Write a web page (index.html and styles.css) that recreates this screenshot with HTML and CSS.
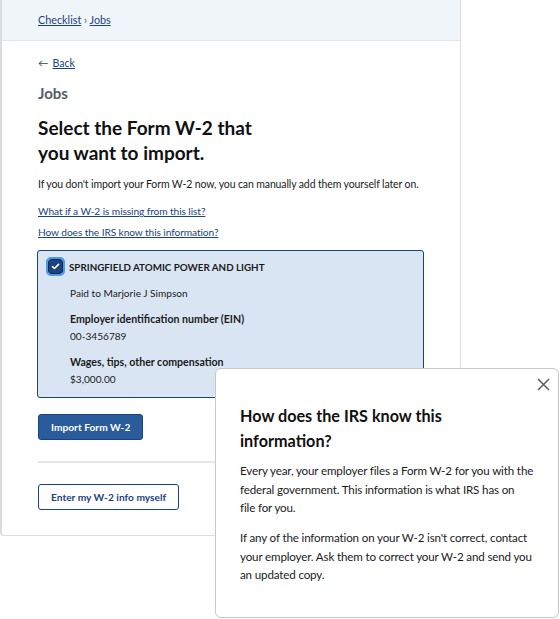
FILE: index.html
```html
<!DOCTYPE html>
<html lang="en">
<head>
    <meta charset="UTF-8">
    <meta name="viewport" content="width=device-width, initial-scale=1.0">
    <title>Jobs - Select Form W-2</title>
    <link rel="stylesheet" href="styles.css">
</head>
<body>

<div class="screen">
    <div class="page">
        <div class="crumbs">
            <a href="#">Checklist</a> <span class="sep">&rsaquo;</span> <a href="#">Jobs</a>
        </div>

        <div class="content">
            <a href="#" class="back"><span class="arrow">&larr;</span> <span class="back-text">Back</span></a>
            <div class="section">Jobs</div>
            <h1>Select the Form W-2 that<br>you want to import.</h1>
            <p class="intro">If you don't import your Form W-2 now, you can manually add them yourself later on.</p>
            <p class="help"><a href="#">What if a W-2 is missing from this list?</a></p>
            <p class="help"><a href="#">How does the IRS know this information?</a></p>

            <label class="w2">
                <div class="w2-title">
                    <span class="check">
                        <svg width="9" height="7" viewBox="0 0 10 8"><path d="M1.5 4.2 L3.8 6.3 L8.5 1.6" fill="none" stroke="#fff" stroke-width="1.8" stroke-linecap="round" stroke-linejoin="round"/></svg>
                    </span>
                    SPRINGFIELD ATOMIC POWER AND LIGHT
                </div>
                <div class="w2-body">
                    <p>Paid to Marjorie J Simpson</p>
                    <p class="field">Employer identification number (EIN)</p>
                    <p class="value">00-3456789</p>
                    <p class="field">Wages, tips, other compensation</p>
                    <p class="value">$3,000.00</p>
                </div>
            </label>

            <button class="button primary">Import Form W-2</button>
            <hr>
            <button class="button outline">Enter my W-2 info myself</button>
        </div>
    </div>

    <div class="modal">
        <button class="close" aria-label="Close">
            <svg width="13" height="13" viewBox="0 0 13 13"><path d="M1 1 L12 12 M12 1 L1 12" stroke="#5c5c5c" stroke-width="1.5" fill="none"/></svg>
        </button>
        <h2>How does the IRS know this information?</h2>
        <p>Every year, your employer files a Form W-2 for you with the federal government. This information is what IRS has on file&nbsp;for&nbsp;you.</p>
        <p>If any of the information on your W-2 isn't correct, contact your employer. Ask them to correct your W-2 and send you an updated copy.</p>
    </div>
</div>

</body>
</html>
```

FILE: styles.css
```css
body {
    margin: 0;
    font-family: Lato, "Open Sans", sans-serif;
    color: #1b1b1b;
    background: #fff;
}
a {
    color: #1a4480;
}
.screen {
    position: relative;
    width: 560px;
    height: 619px;
}
.page {
    width: 458px;
    height: 535px;
    border: 1px solid #dcdcdc;
    border-left-width: 2px;
    border-top: none;
    border-radius: 0 0 4px 4px;
}
.crumbs {
    height: 41px;
    box-sizing: border-box;
    padding: 0 0 0 36px;
    line-height: 40px;
    background: #f0f5fa;
    border-bottom: 1px solid #e1e6ec;
    font-size: 10.8px;
}
.crumbs .sep {
    color: #555;
}
.content {
    padding: 15px 36px 0;
}
.back {
    display: flex;
    width: fit-content;
    gap: 4px;
    font-size: 10.5px;
    line-height: 14px;
    text-decoration: none;
}
.back-text {
    text-decoration: underline;
}
.section {
    margin-top: 14px;
    font-size: 15px;
    line-height: 18px;
    font-weight: bold;
    color: #565c65;
}
h1 {
    margin: 13px 0 0;
    font-size: 19px;
    line-height: 25px;
    font-weight: bold;
    color: #111;
}
.intro {
    margin: 12px 0 0;
    font-size: 10.5px;
    line-height: 14px;
    letter-spacing: -0.12px;
}
.help {
    margin: 13px 0 0;
    font-size: 10.2px;
    line-height: 14px;
    letter-spacing: -0.1px;
}
.help + .help {
    margin-top: 7px;
}
.w2 {
    display: block;
    margin: 11px 0 0 -1px;
    width: 387px;
    box-sizing: border-box;
    padding: 8px 10px 11px;
    background: #d9e5f3;
    border: 1px solid #1a4480;
    border-radius: 3px;
    font-size: 10.1px;
    line-height: 14px;
}
.w2-title {
    display: flex;
    align-items: center;
    gap: 6px;
    font-weight: bold;
    font-size: 9.8px;
}
.check {
    display: flex;
    align-items: center;
    justify-content: center;
    width: 15px;
    height: 15px;
    box-sizing: border-box;
    background: #1a4480;
    border: 1px solid #102a52;
    border-radius: 3px;
    outline: 2px solid #4d97f0;
    outline-offset: 0;
}
.w2-body {
    padding-left: 22px;
}
.w2-body p {
    margin: 12px 0 0;
}
.w2-body .field {
    font-weight: bold;
    font-size: 10.6px;
}
.w2-body .value {
    margin-top: 3px;
}
.button {
    display: block;
    height: 26px;
    padding: 0 12px;
    font-family: inherit;
    font-weight: bold;
    font-size: 10.2px;
    border: 1px solid #1a4480;
    border-radius: 3px;
    cursor: pointer;
}
.primary {
    margin-top: 16px;
    background: #2a5b9b;
    color: #fff;
}
hr {
    margin: 21px -36px 0 0;
    border: none;
    border-top: 2px solid #e6e6e6;
}
.outline {
    margin-top: 21px;
    background: #fff;
    color: #1a4480;
}
.modal {
    position: absolute;
    left: 215px;
    top: 368px;
    width: 344px;
    height: 250px;
    box-sizing: border-box;
    padding: 34px 20px 0 24px;
    background: #fff;
    border: 1px solid #c8c8c8;
    border-radius: 6px;
}
.modal h2 {
    margin: 0;
    width: 230px;
    font-size: 16.2px;
    line-height: 25px;
    font-weight: bold;
    color: #111;
}
.modal p {
    margin: 11.5px 0 0;
    font-size: 11.6px;
    line-height: 18.5px;
    letter-spacing: -0.15px;
}
.modal h2 + p {
    margin-top: 9px;
}
.close {
    position: absolute;
    top: 9px;
    right: 8px;
    padding: 0;
    border: none;
    background: none;
}
```
